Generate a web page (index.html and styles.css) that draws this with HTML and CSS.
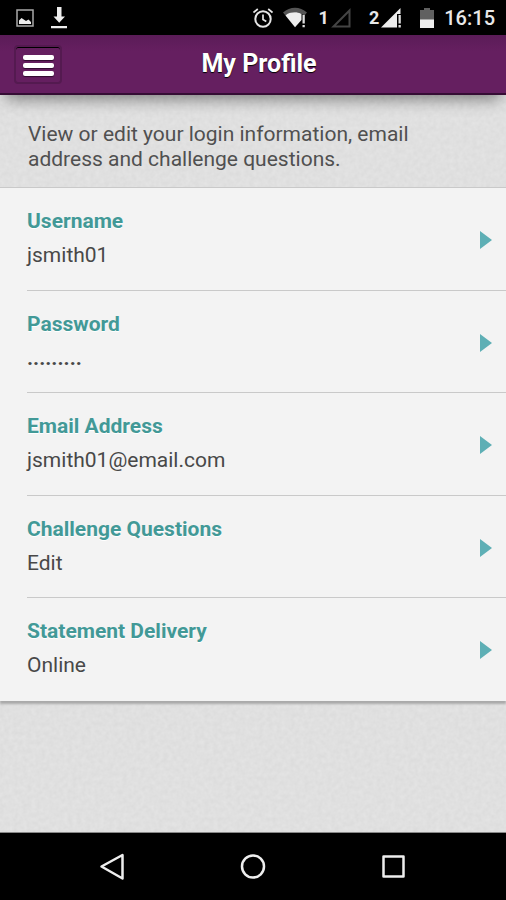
FILE: index.html
```html
<!DOCTYPE html>
<html lang="en">
<head>
<meta charset="utf-8">
<meta name="viewport" content="width=device-width, initial-scale=1">
<title>My Profile</title>
<link rel="stylesheet" href="styles.css">
</head>
<body>
<div class="status">
  <svg width="18" height="18" viewBox="0 0 18 18"><rect x="1" y="1" width="16" height="16" fill="none" stroke="#a9a9a9" stroke-width="1.5"/><path d="M3 15v-3.500l2.500-2.500 1.500 1 1.500 1 1.500 1 2.500-1.500 2.500 2.500v2z" fill="#eee"/></svg>
  <svg class="download" width="16" height="22" viewBox="0 0 16 22"><path d="M6 0h4.500v9.500H14L8.200 15.800 2.500 9.500H6zM0 19h16v2.300H0z" fill="#eee"/></svg>
  <div class="status-right">
    <svg width="20" height="20" viewBox="0 0 20 20" fill="none" stroke="#e6e6e6" stroke-width="2"><circle cx="10" cy="11" r="7.700"/><path d="M.5 4.500L4.800 1M15.200 1l4.300 3.500M10 6.500v5l3.300 2" stroke-width="1.700"/></svg>
    <svg width="24" height="21" viewBox="0 0 24 21"><path d="M0 5.500C7-.8 17-.8 24 5.500l-2.500 3C15 4 9 4 2.500 8.500z" fill="#555"/><path d="M2.500 8.500C6 4.300 15 4.300 18.500 7v6L12 20.300z" fill="#eee"/><path d="M19.500 8h2.300v8.500h-2.300zM19.500 18h2.300v2.300h-2.300z" fill="#ddd"/></svg>
    <span class="sim">1</span>
    <svg class="signal" width="20" height="20" viewBox="0 0 20 20"><path d="M2.500 18.500H18.500V2.500z" fill="none" stroke="#444" stroke-width="2"/></svg>
    <span class="sim second">2</span>
    <svg class="signal" width="22" height="20" viewBox="0 0 22 20"><path d="M0 19.500L19.500 0v6H16v13.500z" fill="#eee"/><path d="M17.500 7h2.300v8.500h-2.300zM17.500 17h2.300v2.500h-2.300z" fill="#ddd"/></svg>
    <svg class="battery" width="14" height="20" viewBox="0 0 14 20"><path d="M4 0h6v2h4v18H0V2h4z" fill="#606060"/><path d="M0 11.500h14V20H0z" fill="#eee"/></svg>
    <time class="clock">16:15</time>
  </div>
</div>
<header class="header">
  <button class="menu" type="button" aria-label="Menu"><span></span><span></span><span></span></button>
  <h1>My Profile</h1>
</header>
<main class="page">
  <svg class="paper" aria-hidden="true"><filter id="grain" x="0" y="0" width="100%" height="100%" color-interpolation-filters="sRGB"><feTurbulence type="fractalNoise" baseFrequency=".22" numOctaves="2" seed="4"/><feColorMatrix values=".045 0 0 0 .855  .045 0 0 0 .855  .045 0 0 0 .855  0 0 0 0 1"/></filter><rect width="100%" height="100%" filter="url(#grain)"/></svg>
  <div class="head-shadow"></div>
  <p class="intro">View or edit your login information, email address and challenge questions.</p>
  <ul class="list">
    <li><a href="#username"><span class="label">Username</span><span class="value">jsmith01</span><svg class="arrow" viewBox="0 0 12 18"><path d="M0 0l12 9L0 18z"/></svg></a></li>
    <li><a href="#password"><span class="label">Password</span><span class="value dots">.........</span><svg class="arrow" viewBox="0 0 12 18"><path d="M0 0l12 9L0 18z"/></svg></a></li>
    <li><a href="#email"><span class="label">Email Address</span><span class="value">jsmith01@email.com</span><svg class="arrow" viewBox="0 0 12 18"><path d="M0 0l12 9L0 18z"/></svg></a></li>
    <li><a href="#questions"><span class="label">Challenge Questions</span><span class="value">Edit</span><svg class="arrow" viewBox="0 0 12 18"><path d="M0 0l12 9L0 18z"/></svg></a></li>
    <li><a href="#delivery"><span class="label">Statement Delivery</span><span class="value">Online</span><svg class="arrow" viewBox="0 0 12 18"><path d="M0 0l12 9L0 18z"/></svg></a></li>
  </ul>
</main>
<nav class="navbar" aria-label="System">
  <button type="button" aria-label="Back"><svg width="28" height="28" viewBox="0 0 28 28"><path d="M23.500 2v23.500L2.500 13.500z"/></svg></button>
  <button type="button" aria-label="Home"><svg width="28" height="28" viewBox="0 0 28 28"><circle cx="14" cy="13.500" r="11"/></svg></button>
  <button type="button" aria-label="Recent apps"><svg width="28" height="28" viewBox="0 0 28 28"><rect x="4.500" y="3.500" width="20" height="20"/></svg></button>
</nav>
</body>
</html>
```
FILE: styles.css
```css
* { box-sizing: border-box; }
body {
  margin: 0;
  min-height: 100vh;
  display: flex;
  flex-direction: column;
  background: #e0e0e0;
  color: #505050;
  font-family: Roboto, "Liberation Sans", sans-serif;
}
svg { display: block; flex: none; }
button { padding: 0; border: 0; background: none; cursor: pointer; }

.status {
  height: 35px;
  padding: 0 11px 0 16px;
  display: flex;
  align-items: center;
  background: #000;
  color: #e8e8e8;
}
.download { margin-left: 17px; }
.status-right { margin-left: auto; display: flex; align-items: center; }
.status-right svg + svg { margin-left: 10px; }
.sim { margin-left: 12px; font-size: 18px; font-weight: 700; line-height: 20px; }
.second { margin-left: 18px; }
.signal { margin-left: 2px; }
.status-right .battery { margin-left: 17px; }
.clock { margin-left: 10px; font-size: 20px; font-weight: 500; line-height: 24px; }

.header {
  height: 60px;
  padding: 0 14px;
  display: grid;
  grid-template-columns: 48px 1fr 36px;
  align-items: center;
  background: linear-gradient(#5b1c58, #651f60 16px);
  border-bottom: 2px solid #350d34;
}
.header h1 {
  margin: 0;
  color: #fff;
  font-size: 25px;
  font-weight: 700;
  line-height: 30px;
  text-align: center;
  text-shadow: 0 1px 1px #000;
}
.menu {
  width: 48px;
  height: 39px;
  padding-top: 2px;
  display: flex;
  flex-direction: column;
  align-items: center;
  justify-content: center;
  gap: 3px;
  border: 2px solid #541a50;
  border-radius: 4px;
  box-shadow: inset 0 1px #000;
}
.menu span { width: 31px; height: 5px; border-radius: 2px; background: #fff; box-shadow: 0 1px 1px #300b2f; }

.page { flex: 1; position: relative; overflow: hidden; }
.paper { position: absolute; inset: 0; width: 100%; height: 100%; }
.head-shadow {
  position: absolute;
  inset: -20px 8px auto;
  height: 20px;
  box-shadow: 0 2px 16px 2px rgba(0, 0, 0, .45);
}
.intro {
  position: relative;
  margin: 0;
  padding: 27px 60px 15px 28px;
  font-size: 21px;
  line-height: 25px;
}
.list {
  position: relative;
  min-height: 514px;
  margin: 0;
  padding: 0;
  display: grid;
  grid-auto-rows: 1fr;
  list-style: none;
  background: #f3f3f3;
  border-top: 1px solid #c9c9c9;
  box-shadow: 0 3px 2px #aaa;
}
.list a {
  position: relative;
  height: 100%;
  margin-left: 27px;
  padding: 18px 40px 16px 0;
  display: flex;
  flex-direction: column;
  gap: 1px;
  border-bottom: 1px solid #c9c9c9;
  color: #484848;
  text-decoration: none;
}
.list li:last-child a { border-bottom: 0; }
.label { color: #429997; font-size: 21px; font-weight: 700; line-height: 30px; text-shadow: 0 1px #fff; }
.value { font-size: 21px; line-height: 36px; }
.dots { font-weight: 700; }
.arrow { position: absolute; top: 43px; right: 14px; width: 12px; height: 18px; fill: #5eafb5; }

.navbar {
  height: 68px;
  padding: 0 43px;
  display: grid;
  grid-template-columns: repeat(3, 1fr);
  align-items: center;
  background: #000;
  border-top: 1px solid #888;
}
.navbar svg { margin: auto; fill: none; stroke: #eee; stroke-width: 2.500; stroke-linejoin: round; }
```
